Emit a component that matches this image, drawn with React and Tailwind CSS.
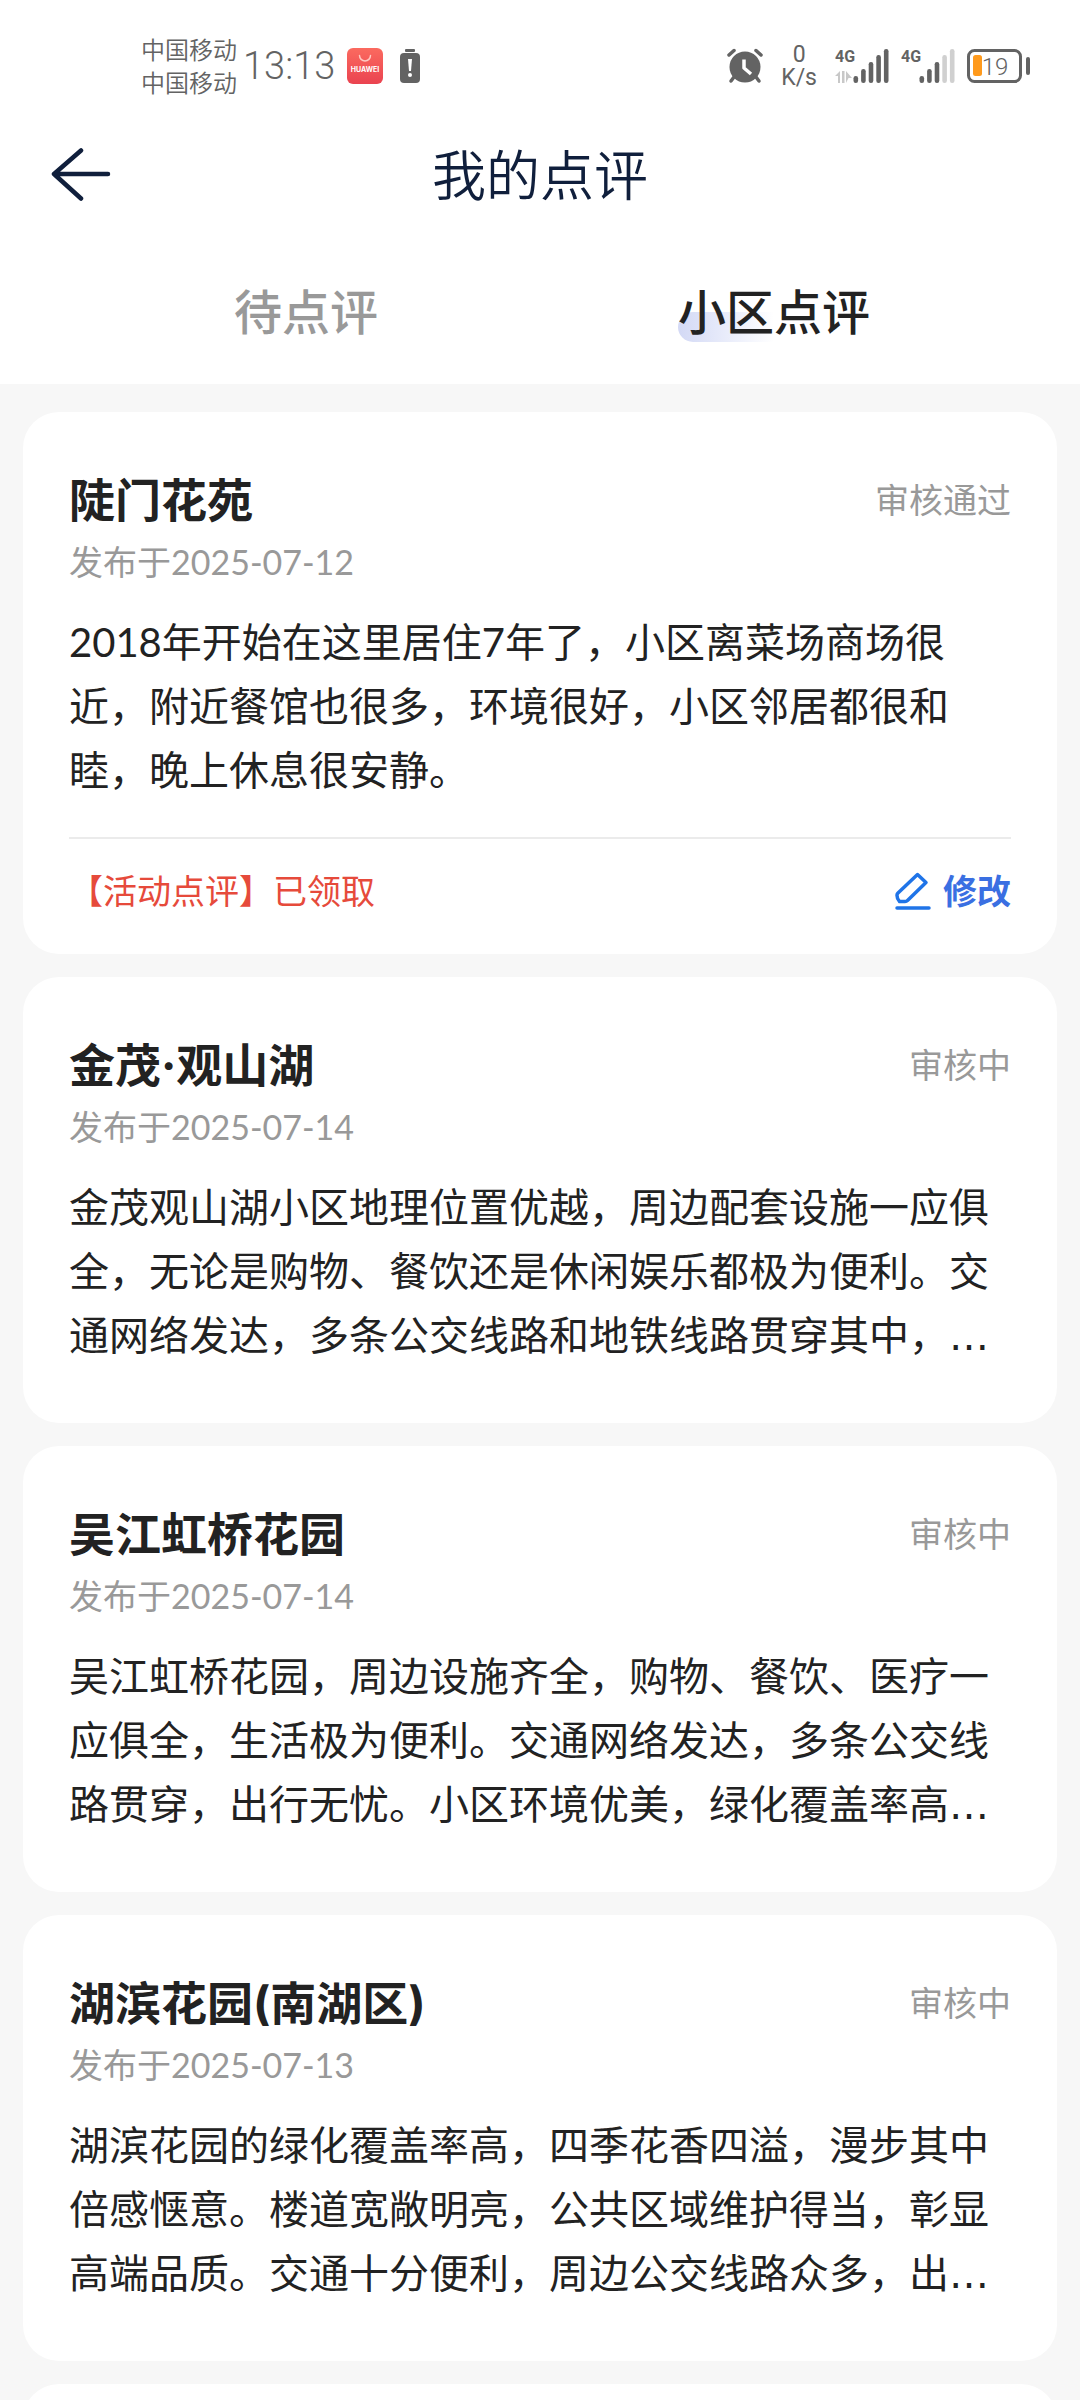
import React, { useState } from 'react';
import clsx from 'clsx';

const reviews = [
    {
        id: 1,
        name: '陡门花苑',
        date: '2025-07-12',
        status: '审核通过',
        content: '2018年开始在这里居住7年了，小区离菜场商场很近，附近餐馆也很多，环境很好，小区邻居都很和睦，晚上休息很安静。',
        reward: '【活动点评】已领取',
    },
    {
        id: 2,
        name: '金茂·观山湖',
        date: '2025-07-14',
        status: '审核中',
        content: '金茂观山湖小区地理位置优越，周边配套设施一应俱全，无论是购物、餐饮还是休闲娱乐都极为便利。交通网络发达，多条公交线路和地铁线路贯穿其中，',
        truncated: true,
    },
    {
        id: 3,
        name: '吴江虹桥花园',
        date: '2025-07-14',
        status: '审核中',
        content: '吴江虹桥花园，周边设施齐全，购物、餐饮、医疗一应俱全，生活极为便利。交通网络发达，多条公交线路贯穿，出行无忧。小区环境优美，绿化覆盖率高',
        truncated: true,
    },
    {
        id: 4,
        name: '湖滨花园(南湖区)',
        date: '2025-07-13',
        status: '审核中',
        content: '湖滨花园的绿化覆盖率高，四季花香四溢，漫步其中倍感惬意。楼道宽敞明亮，公共区域维护得当，彰显高端品质。交通十分便利，周边公交线路众多，出',
        truncated: true,
    },
];

const tabs = [
    { key: 'pending', label: '待点评' },
    { key: 'community', label: '小区点评' },
];

const AppGalleryIcon = () => (
    <svg className="w-9 h-9" viewBox="0 0 36 36">
        <defs>
            <linearGradient id="gallery" x1="0" y1="0" x2="0" y2="1">
                <stop offset="0" stopColor="#fb6a5f" />
                <stop offset="1" stopColor="#ea4350" />
            </linearGradient>
        </defs>
        <rect width="36" height="36" rx="6" fill="url(#gallery)" />
        <path d="M12.500 7.500a5.500 5.500 0 0 0 11 0" fill="none" stroke="#ffc9c2" strokeWidth="1.500" strokeLinecap="round" />
        <text x="18" y="23.500" textAnchor="middle" fontSize="7" fontWeight="700" fill="#fff" fontFamily="Inter, sans-serif">HUAWEI</text>
    </svg>
);

const BatteryAlertIcon = () => (
    <svg className="w-5 h-9" viewBox="0 0 20 36">
        <rect x="5" y="1" width="10" height="3" rx="1" fill="#636363" />
        <rect x="0" y="5" width="20" height="30" rx="4" fill="#636363" />
        <path d="M8 11h4l-1 12H9z" fill="#fff" />
        <circle cx="10" cy="27" r="2" fill="#fff" />
    </svg>
);

const AlarmIcon = () => (
    <svg className="w-9 h-9" viewBox="0 0 36 36" fill="none" strokeLinecap="round">
        <path d="M2 7l5-4.500M34 7l-5-4.500" stroke="#636363" strokeWidth="3.500" />
        <path d="M7 29l-3 4M29 29l3 4" stroke="#636363" strokeWidth="3.500" />
        <circle cx="18" cy="19" r="15.500" fill="#636363" />
        <path d="M17 11.500V20l7 6" stroke="#fff" strokeWidth="3.500" strokeLinecap="butt" strokeLinejoin="round" />
    </svg>
);

const Signal = ({ level, traffic }) => (
    <div className="flex items-center">
        <div className="flex flex-col w-[18px] h-[34px]">
            <span className="text-[16px] leading-[16px] font-bold font-[Roboto,sans-serif]">4G</span>
            {traffic && (
                <svg className="w-[17px] h-3 mt-1.5" viewBox="0 0 17 12" fill="#c8c8c8">
                    <path d="M0 5l5-5v12H3V5zM7 0h2.500v12H7zM11 0l6 7h-3.500l-2.500 5z" />
                </svg>
            )}
        </div>
        <svg className="w-9 h-[34px]" viewBox="0 0 36 34">
            {[7, 14, 21, 28, 34].map((height, i) => (
                <rect
                    key={height}
                    x={0.5 + i * 7.6}
                    y={34 - height}
                    width="4.600"
                    height={height}
                    rx="2.200"
                    fill={i < level ? '#636363' : '#d0d0d0'}
                />
            ))}
        </svg>
    </div>
);

const BatteryIcon = () => (
    <svg className="w-16 h-9" viewBox="0 0 64 36">
        <rect x="1.500" y="2.500" width="52" height="31" rx="6" fill="none" stroke="#636363" strokeWidth="3" />
        <rect x="6" y="7" width="9" height="21" rx="2.500" fill="#ff9a1c" />
        <rect x="59" y="9" width="4" height="18" rx="2" fill="#636363" />
        <text x="28" y="26.500" textAnchor="middle" fontSize="24" fontWeight="300" fill="#636363" fontFamily="Roboto, sans-serif">19</text>
    </svg>
);

const StatusBar = () => (
    <div className="flex items-center justify-between h-28 pt-5 pl-[141px] pr-[49px] text-[#636363]">
        <div className="flex items-center">
            <div className="text-[24px] leading-[33px] font-[350]">
                <p>中国移动</p>
                <p>中国移动</p>
            </div>
            <span className="ml-1.5 mr-3 text-[38px] leading-[40px] font-[350] font-[Roboto,sans-serif]">13:13</span>
            <AppGalleryIcon />
            <div className="ml-[17px]">
                <BatteryAlertIcon />
            </div>
        </div>
        <div className="flex items-center">
            <AlarmIcon />
            <div className="mx-[18px] text-center text-[23px] leading-[23px] font-[Roboto,sans-serif]">
                <p>0</p>
                <p>K/s</p>
            </div>
            <div className="flex items-center gap-3">
                <Signal level={5} traffic />
                <Signal level={3} />
                <BatteryIcon />
            </div>
        </div>
    </div>
);

const ReviewCard = ({ review }) => (
    <article className="rounded-[36px] bg-white px-[46px] pt-[58px]">
        <div className="flex items-center justify-between">
            <h2 className="text-[46px] leading-[60px] font-bold text-[#222] font-['Inter','Noto_Sans_CJK_SC',sans-serif]">{review.name}</h2>
            <span className="text-[34px] leading-[48px] text-[#999]">{review.status}</span>
        </div>
        <p className="mt-2 text-[34px] leading-[48px] text-[#999]">发布于{review.date}</p>
        <p className="mt-6 text-[40px] leading-[64px] text-[#222]">
            {review.content}
            {review.truncated && <span className="leading-none font-['DejaVu_Sans',sans-serif]">…</span>}
        </p>
        {review.reward ? (
            <div className="flex items-center justify-between mt-[35px] pt-[29px] pb-10 border-t-2 border-[#ebebeb] text-[34px] leading-[46px]">
                <span className="text-[#e64a3b]">{review.reward}</span>
                <button type="button" className="flex items-center gap-3 font-bold text-[#3a6fe2]">
                    <svg className="w-9 h-10" viewBox="0 0 36 40" fill="none" stroke="#1f74e8" strokeWidth="3.500" strokeLinecap="round" strokeLinejoin="round">
                        <path d="M22.500 3.500L31 11.500 12.500 29.500Q11.500 30.500 10 30.500H4.500Q2 28 2 24.500V24Q2 23 3 22z" />
                        <path d="M2 37h32" />
                    </svg>
                    修改
                </button>
            </div>
        ) : (
            <div className="h-14" />
        )}
    </article>
);

const App = () => {
    const [activeTab, setActiveTab] = useState('community');

    return (
        <div className="flex flex-col h-screen overflow-hidden bg-[#f7f7f7] font-['Lato','Noto_Sans_CJK_SC',sans-serif]">
            <header className="shrink-0 bg-white">
                <StatusBar />
                <div className="grid grid-cols-[1fr_auto_1fr] items-center h-32 px-[50px]">
                    <button type="button" aria-label="返回" className="justify-self-start">
                        <svg className="w-[62px] h-14" viewBox="0 0 62 56" fill="none" stroke="#101f3c" strokeWidth="4.500" strokeLinecap="round" strokeLinejoin="round">
                            <path d="M31 2.500L4 26l27 24.500M4 26h54" />
                        </svg>
                    </button>
                    <h1 className="text-[54px] leading-[72px] font-[350] text-[#101f3c]">我的点评</h1>
                </div>
                <div role="tablist" className="flex h-36 px-[72px]">
                    {tabs.map((tab) => {
                        const active = tab.key === activeTab;
                        return (
                            <button
                                key={tab.key}
                                type="button"
                                role="tab"
                                aria-selected={active}
                                onClick={() => setActiveTab(tab.key)}
                                className={clsx(
                                    'flex-1 flex items-center justify-center text-[48px] leading-[60px] font-medium',
                                    active ? 'text-[#222]' : 'text-[#999]'
                                )}
                            >
                                <span className="relative">
                                    {active && (
                                        <span className="absolute left-0 bottom-0 w-1/2 h-[30px] rounded-l-full bg-linear-to-r from-[#d3d9f5] to-white" />
                                    )}
                                    <span className="relative">{tab.label}</span>
                                </span>
                            </button>
                        );
                    })}
                </div>
            </header>

            <main className="flex-1 min-h-0 px-[23px] pt-7 space-y-[23px] overflow-hidden">
                {reviews.map((review) => (
                    <ReviewCard key={review.id} review={review} />
                ))}
                <div className="h-28 rounded-[36px] bg-white" />
            </main>
        </div>
    );
};

export default App;
